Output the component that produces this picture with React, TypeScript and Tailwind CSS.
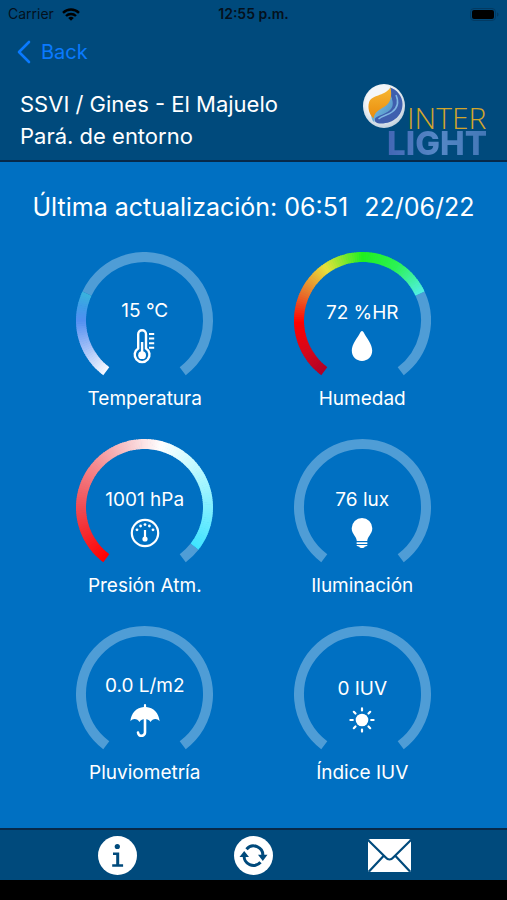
import type { ReactNode } from "react";

type Stop = [angle: number, rgb: [number, number, number]];

type Reading = {
  id: string;
  label: string;
  value: string;
  end: number;
  stops: Stop[];
  icon: ReactNode;
};

const START = 37;
const END = 323;

// Angles run clockwise from the bottom of the dial.
function point(angle: number, radius: number) {
  const a = (angle * Math.PI) / 180;
  return `${(68.5 - radius * Math.sin(a)).toFixed(2)} ${(68.5 + radius * Math.cos(a)).toFixed(2)}`;
}

function arc(from: number, to: number) {
  const large = to - from > 180 ? 1 : 0;
  return `M${point(from, 63.5)}A63.5 63.5 0 ${large} 1 ${point(to, 63.5)}`;
}

function colorAt(stops: Stop[], angle: number) {
  for (let i = 1; i < stops.length; i++) {
    const [a0, c0] = stops[i - 1];
    const [a1, c1] = stops[i];
    if (angle <= a1) {
      const t = Math.max(0, (angle - a0) / (a1 - a0));
      return `rgb(${c0.map((v, k) => Math.round(v + (c1[k] - v) * t)).join(",")})`;
    }
  }
  return `rgb(${stops[stops.length - 1][1].join(",")})`;
}

function Dial({ end, stops }: { end: number; stops: Stop[] }) {
  const segments: number[] = [];
  if (stops.length) for (let a = START; a < end; a += 2) segments.push(a);
  return (
    <svg className="col-start-1 row-start-1" width="137" height="126" viewBox="0 0 137 126" fill="none" strokeWidth="10" aria-hidden="true">
      <path d={arc(stops.length ? end : START, END)} stroke="#4f9dd6" />
      {segments.map((a) => (
        <path key={a} d={arc(a, Math.min(a + 2.6, end))} stroke={colorAt(stops, a + 1)} />
      ))}
    </svg>
  );
}

const ThermometerIcon = (
  <svg width="26" height="35" viewBox="0 0 26 35" fill="none" stroke="#fff" aria-hidden="true">
    <path d="M6.2 19.4V5.200a3.900 3.900 0 0 1 7.800 0v14.200a7.400 7.400 0 1 1-7.800 0Z" strokeWidth="2.400" />
    <path d="M10.100 13v13" strokeWidth="2.400" />
    <circle cx="10.100" cy="26.200" r="3.900" fill="#fff" stroke="none" />
    <path d="M17 5h5.200M17 9.600h5.200M17 14.200h5.200M17 18.800h5.200" strokeWidth="2" />
  </svg>
);

const DropIcon = (
  <svg width="22" height="30" viewBox="0 0 22 30" fill="#fff" aria-hidden="true">
    <path d="M11 0C12 0 12.500 1 13 2c2.600 5 8.200 11 8.200 17.600C21.200 25.600 16.800 30 11 30S.8 25.600.8 19.600C.8 13 6.400 7 9 2c.5-1 1-2 2-2Z" />
  </svg>
);

const PressureIcon = (
  <svg width="30" height="30" viewBox="0 0 30 30" fill="none" stroke="#fff" aria-hidden="true">
    <circle cx="15" cy="15" r="13.200" strokeWidth="2.200" />
    <path d="M15 12v9" strokeWidth="2.200" />
    <circle cx="15" cy="21" r="2.600" fill="#fff" stroke="none" />
    <g fill="#fff" stroke="none">
      <circle cx="7" cy="11.800" r="1.400" />
      <circle cx="10.600" cy="8" r="1.400" />
      <circle cx="15" cy="6.600" r="1.400" />
      <circle cx="19.400" cy="8" r="1.400" />
      <circle cx="23" cy="11.800" r="1.400" />
    </g>
  </svg>
);

const BulbIcon = (
  <svg width="22" height="30" viewBox="0 0 22 30" fill="#fff" aria-hidden="true">
    <path d="M11 0a10.300 10.300 0 0 1 10.300 10.300c0 3.200-1.300 5.100-2.700 7.100-1.200 1.700-2.200 3.200-2.400 5.600H5.800c-.2-2.400-1.200-3.900-2.400-5.600C2 15.400.7 13.500.7 10.300A10.300 10.300 0 0 1 11 0Z" />
    <rect x="5.500" y="24.200" width="11" height="1.700" rx=".6" />
    <path d="M5.500 27h11c-.3 1-1 1.400-2 1.400h-.6c-.4 1-1.600 1.600-2.900 1.600s-2.500-.6-2.900-1.600h-.6c-1 0-1.700-.4-2-1.400Z" />
  </svg>
);

const UmbrellaIcon = (
  <svg width="30" height="33" viewBox="0 0 30 33" fill="none" aria-hidden="true">
    <path d="M13.900 1.200a1.100 1.100 0 0 1 2.200 0V3C23.500 3.400 29 9.200 29.600 17.300c-1.300-1.500-2.500-2.200-4.200-2.200-2.100 0-3.700 1-4.900 2.900-1.400-2-3.100-2.900-5.500-2.900S10.900 16 9.500 18c-1.200-1.900-2.800-2.900-4.900-2.900-1.700 0-2.900.7-4.200 2.200C1 9.200 6.500 3.400 13.900 3Z" fill="#fff" />
    <path d="M15 14v14.200a3.500 3.500 0 0 1-7 .3" stroke="#fff" strokeWidth="2.600" strokeLinecap="round" />
  </svg>
);

const SunIcon = (
  <svg width="26" height="26" viewBox="0 0 26 26" stroke="#fff" strokeWidth="2.200" strokeLinecap="round" aria-hidden="true">
    <circle cx="13" cy="13" r="6.300" fill="#fff" stroke="none" />
    <path d="M13 1.400v2M13 22.600v2M1.400 13h2.400M22.200 13h2.400M4.800 4.800l1.700 1.700M19.500 19.500l1.700 1.700M4.800 21.200l1.700-1.700M19.500 6.500l1.700-1.700" />
  </svg>
);

const readings: Reading[] = [
  {
    id: "temperatura",
    label: "Temperatura",
    value: "15 °C",
    end: 115,
    stops: [
      [37, [246, 248, 255]],
      [65, [160, 190, 247]],
      [90, [82, 144, 242]],
      [103, [62, 158, 232]],
      [115, [58, 180, 220]],
    ],
    icon: ThermometerIcon,
  },
  {
    id: "humedad",
    label: "Humedad",
    value: "72 %HR",
    end: 245,
    stops: [
      [37, [176, 0, 40]],
      [60, [212, 8, 28]],
      [88, [255, 0, 0]],
      [115, [232, 115, 44]],
      [145, [232, 226, 58]],
      [180, [32, 240, 32]],
      [212, [44, 242, 84]],
      [245, [82, 240, 228]],
    ],
    icon: DropIcon,
  },
  {
    id: "presion",
    label: "Presión Atm.",
    value: "1001 hPa",
    end: 308,
    stops: [
      [37, [255, 0, 0]],
      [90, [240, 76, 84]],
      [130, [246, 138, 142]],
      [165, [248, 200, 204]],
      [195, [255, 255, 255]],
      [232, [192, 250, 255]],
      [308, [64, 228, 255]],
    ],
    icon: PressureIcon,
  },
  { id: "iluminacion", label: "Iluminación", value: "76 lux", end: START, stops: [], icon: BulbIcon },
  { id: "pluviometria", label: "Pluviometría", value: "0.0 L/m2", end: START, stops: [], icon: UmbrellaIcon },
  { id: "iuv", label: "Índice IUV", value: "0 IUV", end: START, stops: [], icon: SunIcon },
];

function Gauge({ reading }: { reading: Reading }) {
  return (
    <section className="flex flex-col items-center gap-[9px]" aria-labelledby={reading.id}>
      <div className="grid justify-items-center">
        <Dial end={reading.end} stops={reading.stops} />
        <div className="col-start-1 row-start-1 flex flex-col items-center justify-center gap-1.5 pt-8">
          <p className="text-[19px] leading-6">{reading.value}</p>
          {reading.icon}
        </div>
      </div>
      <h2 id={reading.id} className="text-[19px] leading-6">
        {reading.label}
      </h2>
    </section>
  );
}

function Logo() {
  return (
    <div className="grid">
      <svg className="col-start-1 row-start-1" width="44" height="46" viewBox="0 0 44 46" aria-hidden="true">
        <defs>
          <radialGradient id="ball" cx=".45" cy=".4" r=".6">
            <stop offset=".6" stopColor="#f4f6f8" />
            <stop offset="1" stopColor="#c3d2de" />
          </radialGradient>
          <linearGradient id="flame" x1="0" y1="0" x2="0" y2="1">
            <stop offset="0" stopColor="#f7b733" />
            <stop offset="1" stopColor="#ea8c0c" />
          </linearGradient>
          <linearGradient id="wave" x1="0" y1="0" x2="1" y2="1">
            <stop offset="0" stopColor="#86cbe6" />
            <stop offset="1" stopColor="#4a8cc4" />
          </linearGradient>
        </defs>
        <ellipse cx="21" cy="22" rx="21" ry="22" fill="url(#ball)" />
        <path d="M27 3.500c7 2 12.500 9 12.500 16.500C39.500 31 31 39.500 18 39.500c-4.500 0-7-2-6.500-5 1-6 13.500-5 16.500-12C31 16 25.500 11 27 3.500Z" fill="#3f5fae" />
        <path d="M27.500 6c-1 6 3.500 10 2 16-2 7-11 8-16.500 11.500-1.500 1-2 3-1.500 5C6 34 8 26 15 22.500 22 19 26.500 16 27.500 6Z" fill="url(#wave)" />
        <path d="M27.500 3.500c1.500 8 1 15-6.500 19.500-5 3-9.500 5-10.500 11.500C6 30 4.500 24 6 18.500 9 10 20.500 13 27.500 3.500Z" fill="url(#flame)" />
        <path d="M33 11c3 7 1.500 13-4 17-4.500 3.300-9.500 3.500-13.500 7" fill="none" stroke="#7fb6e2" strokeWidth="1.500" />
      </svg>
      <div className="col-start-1 row-start-1 pt-[22px] pl-6">
        <p className="pl-5 font-['Open_Sans',sans-serif] text-[30px] leading-6 font-light text-[#d2a52c]">INTER</p>
        <p className="bg-linear-to-r from-[#4266b4] via-[#5688c6] to-[#4377b6] bg-clip-text text-[33px] leading-[26px] font-extrabold text-transparent">
          LIGHT
        </p>
      </div>
    </div>
  );
}

export default function App() {
  return (
    <div className="flex min-h-screen flex-col bg-black font-[Inter,'Liberation_Sans',sans-serif] text-white">
      <header className="border-b-2 border-[#06294a] bg-[#004a7c]">
        <div className="grid h-7 grid-cols-3 items-center px-2 text-[14px] leading-5 text-[#04111d]">
          <div className="flex items-center gap-2">
            <span>Carrier</span>
            <svg width="18" height="13" viewBox="0 0 18 13" aria-hidden="true">
              <g fill="none" stroke="#000" strokeWidth="2.400">
                <path d="M1 4.800a11.500 11.500 0 0 1 16 0" />
                <path d="M4 8a7.200 7.200 0 0 1 10 0" />
              </g>
              <path d="M9 12.800 6.200 10a4 4 0 0 1 5.600 0Z" />
            </svg>
          </div>
          <span className="text-center font-semibold">12:55 p.m.</span>
          <svg className="justify-self-end" width="29" height="13" viewBox="0 0 29 13" aria-hidden="true">
            <rect x=".5" y=".5" width="25" height="12" rx="3.500" fill="none" stroke="#033a62" />
            <rect x="2" y="2" width="22" height="9" rx="2" />
            <path d="M27 4.500v4c1-.4 1.500-1 1.500-2s-.5-1.600-1.500-2Z" fill="#033a62" />
          </svg>
        </div>
        <button type="button" className="mt-2 flex h-8 items-center gap-2.5 px-4 text-[20px] leading-8 text-[#0a7aff]">
          <svg width="15" height="24" viewBox="0 0 15 24" fill="none" stroke="currentColor" strokeWidth="2.600" strokeLinecap="round" strokeLinejoin="round" aria-hidden="true">
            <path d="M13 2 3 12l10 10" />
          </svg>
          Back
        </button>
        <div className="flex h-[92px] items-start justify-between px-5">
          <h1 className="pt-5 text-[22px] leading-8">
            SSVI / Gines - El Majuelo
            <br />
            Pará. de entorno
          </h1>
          <div className="pt-4">
            <Logo />
          </div>
        </div>
      </header>

      <main className="flex-1 bg-[#0070c2] px-9 pb-9">
        <p className="flex justify-center gap-4 pt-[29px] text-[25px] leading-8 whitespace-nowrap">
          <span>Última actualización: 06:51</span>
          <span>22/06/22</span>
        </p>
        <div className="mt-[29px] grid grid-cols-2 gap-y-7">
          {readings.map((r) => (
            <Gauge key={r.id} reading={r} />
          ))}
        </div>
      </main>

      <footer className="mb-5 grid h-[52px] grid-cols-3 place-items-center border-t-2 border-[#06294a] bg-[#004a7c] px-[49px]">
        <button type="button" aria-label="Información">
          <svg width="39" height="39" viewBox="0 0 39 39" fill="#004a7c" aria-hidden="true">
            <circle cx="19.500" cy="19.500" r="19.500" fill="#fff" />
            <circle cx="19.300" cy="10.500" r="2.600" />
            <path d="M15 16.400h6.200v11.800h3.900v2.600H14.200v-2.600h4V19H15Z" />
          </svg>
        </button>
        <button type="button" aria-label="Actualizar">
          <svg width="39" height="39" viewBox="0 0 39 39" fill="none" aria-hidden="true">
            <circle cx="19.500" cy="19.500" r="19.500" fill="#fff" />
            <g stroke="#004a7c" strokeWidth="3">
              <path d="M12.500 13.200A9.300 9.300 0 0 1 28.800 20" />
              <path d="M26.500 26.200A9.300 9.300 0 0 1 10.200 19" />
            </g>
            <path d="M24 18.800h9.500l-4.700 6.200ZM5.500 21h9.500L10.200 15Z" fill="#004a7c" />
          </svg>
        </button>
        <button type="button" aria-label="Mensajes">
          <svg width="43" height="33" viewBox="0 0 43 33" aria-hidden="true">
            <rect width="43" height="33" rx="2.500" fill="#fff" />
            <path d="M0 1l17.500 17.200q4 4.600 8 0L43 1M1 32.500l14.500-15.500M42 32.500 27.500 17" fill="none" stroke="#004a7c" strokeWidth="2.200" />
          </svg>
        </button>
      </footer>
    </div>
  );
}
